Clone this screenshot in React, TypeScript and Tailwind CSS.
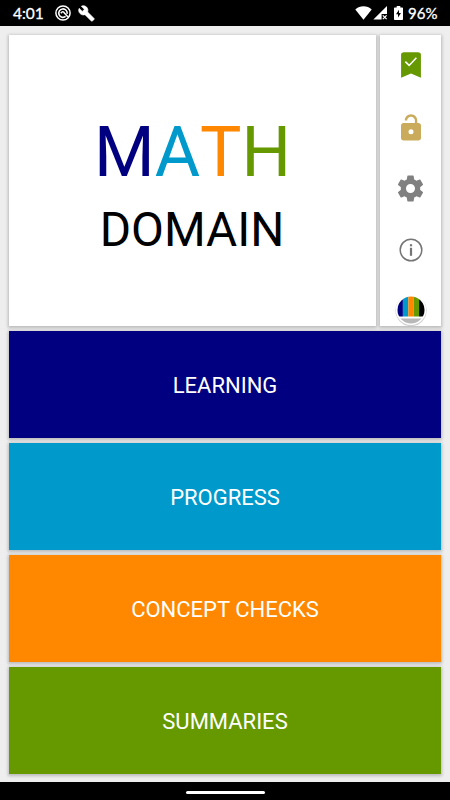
import { ReactNode } from 'react'

const sections = [
    { name: 'LEARNING', color: 'bg-[#000080]' },
    { name: 'PROGRESS', color: 'bg-[#0099cc]' },
    { name: 'CONCEPT CHECKS', color: 'bg-[#ff8800]' },
    { name: 'SUMMARIES', color: 'bg-[#669900]' },
]

const cardShadow = 'shadow-[0_1px_3px_1px_rgba(0,0,0,0.22)]'

function StatusBar() {
    return (
        <div className="flex h-[26px] shrink-0 items-center justify-between bg-black pl-[13px] pr-[13px] text-white">
            <div className="flex items-center">
                <span className="w-[31px] whitespace-nowrap pt-px font-['Lato','Open_Sans',sans-serif] text-[15.5px] leading-none [-webkit-text-stroke:0.3px_white]">4:01</span>
                <svg className="ml-[11px]" width="16" height="16" viewBox="0 0 16 16" fill="none" stroke="white">
                    <circle cx="8" cy="8" r="7.1" strokeWidth="1.5" />
                    <path d="M10.6 11.4 A4.2 4.2 0 1 1 12.1 8.9" strokeWidth="1.6" />
                    <path d="M5.8 8.2 Q8 5.6 9.4 8 L13 12" strokeWidth="1.5" />
                </svg>
                <svg className="ml-[7px]" width="17" height="17" viewBox="0 0 24 24" fill="white" stroke="white" strokeWidth="0.9">
                    <path d="M22.7 19l-9.1-9.1c.9-2.3.4-5-1.5-6.9-2-2-5-2.4-7.4-1.3L9 6 6 9 1.6 4.7C.4 7.1.9 10.1 2.9 12.1c1.9 1.9 4.6 2.4 6.9 1.5l9.1 9.1c.4.4 1 .4 1.4 0l2.3-2.3c.5-.4.5-1.1.1-1.4z" />
                </svg>
            </div>
            <div className="flex items-center">
                <svg width="17" height="14" viewBox="0 0 17 14" fill="white">
                    <path d="M8.5 13.8 L0.3 3.6 C4.8-.8 12.2-.8 16.7 3.6z" />
                </svg>
                <svg className="ml-px" width="15" height="14" viewBox="0 0 15 14">
                    <path d="M14 0v8H8.6v5.6H.4z" fill="white" />
                    <path d="M9.8 9.4l3.8 3.8M13.6 9.4l-3.8 3.8" stroke="white" strokeWidth="1.2" />
                </svg>
                <svg className="ml-[6px]" width="9" height="14" viewBox="0 0 9 14">
                    <path d="M2.7 0h3.6v1.5H8.3q.7 0 .7.7v11q0 .8-.8.8H.8q-.8 0-.8-.8v-11q0-.7.7-.7h2z" fill="white" />
                    <path d="M5 3.7L2 8.2h2v3.3l3-4.6H5z" fill="black" />
                </svg>
                <span className="ml-[5px] w-[29px] whitespace-nowrap pt-px font-['Lato','Open_Sans',sans-serif] text-[15px] leading-none [-webkit-text-stroke:0.3px_white]">96%</span>
            </div>
        </div>
    )
}

function IconSlot({ children }: { children: ReactNode }) {
    return <button className="flex h-[61.5px] w-full shrink-0 items-center justify-center">{children}</button>
}

function SideMenu() {
    return (
        <div className={`flex w-[61px] flex-col overflow-hidden bg-white ${cardShadow}`}>
            <div className="-mt-px flex flex-col">
                <IconSlot>
                    <svg width="34" height="34" viewBox="0 0 24 24">
                        <path d="M17 3H7c-1.1 0-2 .7-2 1.6V21l7-3 7 3V4.6C19 3.7 18.1 3 17 3z" fill="#669900" />
                        <path d="M8 9.6l2.7 2.7 5.1-5.4" fill="none" stroke="white" strokeWidth="1.1" />
                    </svg>
                </IconSlot>
                <IconSlot>
                    <svg className="mt-[3px]" width="30" height="30" viewBox="0 0 24 24" fill="#c9ab5b">
                        <path d="M18 8h-1V6c0-2.76-2.24-5-5-5S7 3.24 7 6h1.9c0-1.71 1.39-3.1 3.1-3.1s3.1 1.39 3.1 3.1v2H6c-1.1 0-2 .9-2 2v10c0 1.1.9 2 2 2h12c1.1 0 2-.9 2-2V10c0-1.1-.9-2-2-2z" />
                        <circle cx="12" cy="15" r="2" fill="white" />
                    </svg>
                </IconSlot>
                <IconSlot>
                    <svg className="mt-px" width="31" height="31" viewBox="0 0 24 24" fill="#808080">
                        <path d="M19.43 12.98c.04-.32.07-.64.07-.98s-.03-.66-.07-.98l2.11-1.65c.19-.15.24-.42.12-.64l-2-3.46c-.12-.22-.39-.3-.61-.22l-2.49 1c-.52-.4-1.08-.73-1.69-.98l-.38-2.65C14.46 2.18 14.25 2 14 2h-4c-.25 0-.46.18-.49.42l-.38 2.65c-.61.25-1.17.59-1.69.98l-2.49-1c-.23-.09-.49 0-.61.22l-2 3.46c-.13.22-.07.49.12.64l2.11 1.65c-.04.32-.07.65-.07.98s.03.66.07.98l-2.11 1.65c-.19.15-.24.42-.12.64l2 3.46c.12.22.39.3.61.22l2.49-1c.52.4 1.08.73 1.69.98l.38 2.65c.03.24.24.42.49.42h4c.25 0 .46-.18.49-.42l.38-2.65c.61-.25 1.17-.59 1.69-.98l2.49 1c.23.09.49 0 .61-.22l2-3.46c.12-.22.07-.49-.12-.64l-2.11-1.65zM12 15.5c-1.93 0-3.5-1.57-3.5-3.5s1.57-3.5 3.5-3.5 3.5 1.57 3.5 3.5-1.57 3.5-3.5 3.5z" />
                    </svg>
                </IconSlot>
                <IconSlot>
                    <svg className="mt-px" width="24" height="24" viewBox="0 0 24 24" fill="#757575">
                        <circle cx="12" cy="12" r="10.8" fill="none" stroke="#757575" strokeWidth="1.5" />
                        <rect x="10.9" y="9.8" width="2.2" height="8" />
                        <rect x="10.9" y="6.2" width="2.2" height="2.1" />
                    </svg>
                </IconSlot>
                <IconSlot>
                    <svg className="-mt-px" width="34" height="34" viewBox="0 0 34 34">
                        <defs>
                            <clipPath id="disc">
                                <circle cx="17" cy="17" r="13.5" />
                            </clipPath>
                        </defs>
                        <circle cx="17" cy="17.6" r="15.6" fill="#d0d0d0" />
                        <circle cx="17" cy="16.8" r="15.2" fill="white" />
                        <g clipPath="url(#disc)">
                            <rect x="3" y="3" width="5.9" height="20.5" fill="#000080" />
                            <rect x="8.9" y="3" width="5.4" height="20.5" fill="#0099cc" />
                            <rect x="14.3" y="3" width="5.4" height="20.5" fill="#ff8800" />
                            <rect x="19.7" y="3" width="5.4" height="20.5" fill="#669900" />
                            <rect x="25.1" y="3" width="6" height="20.5" fill="#000000" />
                            <rect x="3" y="25.5" width="28" height="6" fill="#b8b8b8" />
                        </g>
                    </svg>
                </IconSlot>
            </div>
        </div>
    )
}

export default function App() {
    return (
        <div className="flex h-[800px] w-[450px] flex-col overflow-hidden bg-[#eeeeee] font-['Roboto',sans-serif]">
            <StatusBar />
            <div className="flex flex-1 flex-col px-[9px] pt-[9px]">
                <div className="flex h-[291px] gap-1">
                    <div className={`flex w-[367px] flex-col items-center bg-white pt-[77px] ${cardShadow}`}>
                        <h1 className="flex text-[69.5px] leading-[82px]">
                            <span className="text-[#000080]">M</span>
                            <span className="text-[#0099cc]">A</span>
                            <span className="text-[#ff8800]">T</span>
                            <span className="text-[#669900]">H</span>
                        </h1>
                        <h2 className="mt-[8px] pr-px text-[47.8px] leading-[56px] text-black">DOMAIN</h2>
                    </div>
                    <SideMenu />
                </div>
                <div className="mt-[5px] flex flex-col gap-[5px]">
                    {sections.map((section) => (
                        <button
                            key={section.name}
                            className={`flex h-[107px] w-full items-center justify-center pt-[2px] text-[22px] text-white ${section.color} ${cardShadow}`}
                        >
                            {section.name}
                        </button>
                    ))}
                </div>
            </div>
            <div className="flex h-[18px] shrink-0 justify-center bg-black pt-[9px]">
                <div className="h-[2.5px] w-[79px] rounded-full bg-white"></div>
            </div>
        </div>
    )
}
